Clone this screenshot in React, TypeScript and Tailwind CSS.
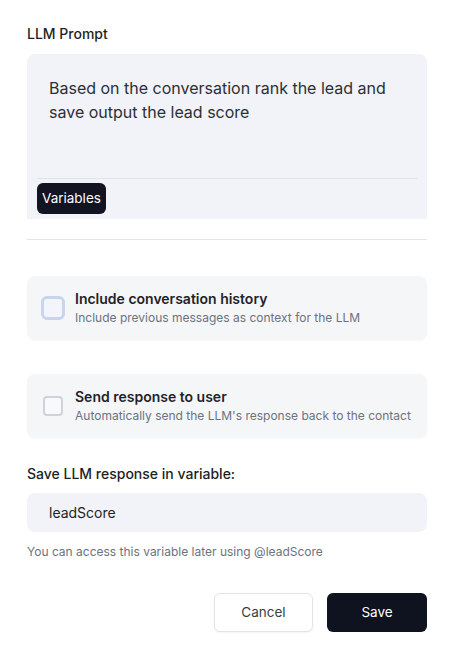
import React from "react";

const sans = { fontFamily: "Inter, 'Liberation Sans', sans-serif" };

function OptionCard({
  title,
  desc,
  focused,
}: {
  title: string;
  desc: string;
  focused?: boolean;
}) {
  return (
    <div className="flex h-[64px] items-center gap-[10px] rounded-lg bg-[#f5f6f8] px-[14px] shadow-[0_1px_2px_rgba(0,0,0,0.03)]">
      <div className="flex h-[24px] w-[24px] shrink-0 items-center justify-center">
        {focused ? (
          <div className="h-[24px] w-[24px] rounded-[6px] border-[3px] border-[#c9d4ee] bg-[#f3f5fa]" />
        ) : (
          <div className="h-[20px] w-[20px] rounded-[4px] border-2 border-[#cfd2d8] bg-[#f8f9fa]" />
        )}
      </div>
      <div className="flex flex-col">
        <span className="text-[14px] font-semibold leading-[20px] text-[#1f2328]">
          {title}
        </span>
        <span className="text-[12px] leading-[18px] text-[#6b7280]">{desc}</span>
      </div>
    </div>
  );
}

export default function App() {
  return (
    <div className="min-h-screen w-full bg-white pl-[27px] pr-[24px] pt-[25px]" style={sans}>
      <label className="block text-[14px] font-medium leading-[18px] text-[#1c1f24]">
        LLM Prompt
      </label>

      {/* Prompt editor */}
      <div className="mt-[11px] rounded-t-lg bg-[#f1f3f8] px-[10px] pt-[22px]">
        <p className="px-[12px] text-[16px] leading-[24px] text-[#2b2f36]">
          Based on the conversation rank the lead and save output the lead score
        </p>
        <div className="mt-[54px] border-t border-[#dfe2e8]" />
        <div className="pt-[4px] pb-[5px]">
          <button className="rounded-[6px] bg-[#121521] px-[5px] py-[6px] text-[13.5px] leading-[19px] text-white">
            Variables
          </button>
        </div>
      </div>

      <div className="mt-[20px] border-t border-[#e2e4e8]" />

      <div className="mt-[36px] flex flex-col gap-[34px]">
        <OptionCard
          focused
          title="Include conversation history"
          desc="Include previous messages as context for the LLM"
        />
        <OptionCard
          title="Send response to user"
          desc="Automatically send the LLM's response back to the contact"
        />
      </div>

      <label className="mt-[26px] block text-[14px] font-medium leading-[20px] text-[#1c1f24]">
        Save LLM response in variable:
      </label>
      <div className="mt-[9px] flex h-[39px] items-center rounded-lg bg-[#f1f3f8] px-[22px] text-[14px] text-[#1c1f24]">
        leadScore
      </div>
      <p className="mt-[12px] text-[12px] leading-[16px] text-[#6b7280]">
        You can access this variable later using @leadScore
      </p>

      <div className="mt-[33px] flex justify-end gap-[14px]">
        <button className="h-[39px] w-[99px] rounded-[6px] border border-[#e2e4e8] bg-white text-[13.5px] text-[#3a3d42] shadow-[0_1px_2px_rgba(0,0,0,0.05)]">
          Cancel
        </button>
        <button className="h-[39px] w-[100px] rounded-[6px] bg-[#0f1320] text-[13.5px] text-white">
          Save
        </button>
      </div>
    </div>
  );
}
